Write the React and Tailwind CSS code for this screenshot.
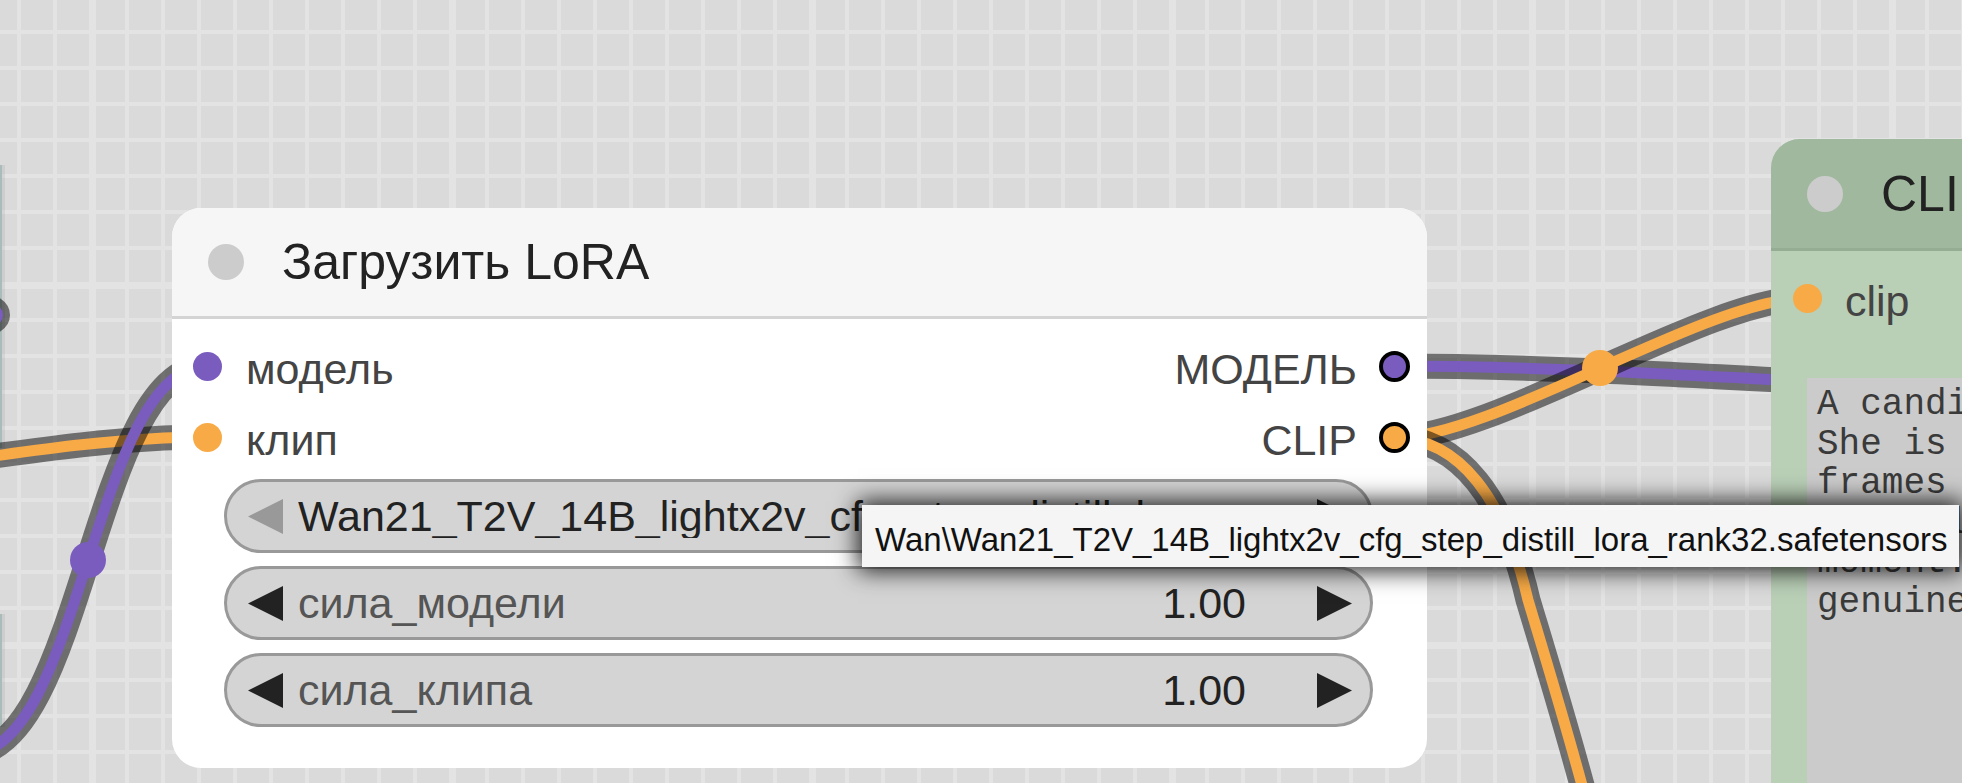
import React from "react";

const PURPLE = "#7a5cbe";
const ORANGE = "#f8aa46";

function Canvas() {
  const v = [];
  for (let k = 0; 17 + 36 * k < 1962; k++) v.push({ x: 17 + 36 * k, w: k % 10 === 2 ? 7 : 4 });
  const h = [];
  for (let k = 0; 30 + 36 * k < 783; k++) h.push({ y: 30 + 36 * k, h: k % 10 === 7 ? 7 : 4 });
  const wires = [
    { d: "M-300,492 C-100,477 60,437 207,437", c: ORANGE },
    { d: "M-31,754 C83,754 93,366 207,366", c: PURPLE },
    { d: "M-40,300 C10,305 10,325 -40,330", c: PURPLE },
    { d: "M1394,366 C1550,366 1700,376 2000,392", c: PURPLE },
    { d: "M1394,438 C1494,438 1707,298 1807,298", c: ORANGE },
    { d: "M1394,438 C1460,438 1505,500 1528,600 C1546,660 1566,725 1586,800", c: ORANGE },
  ];
  return (
    <svg className="absolute inset-0" width="1962" height="783" viewBox="0 0 1962 783">
      <rect x="0" y="0" width="1962" height="783" fill="#dadada" />
      {v.map((l) => (
        <rect key={"v" + l.x} x={l.x} y="0" width={l.w} height="783" fill="#e3e3e3" />
      ))}
      {h.map((l) => (
        <rect key={"h" + l.y} x="0" y={l.y} width="1962" height={l.h} fill="#e3e3e3" />
      ))}
      <rect x="0" y="165" width="2" height="283" fill="#a9bcb9" />
      <rect x="2" y="165" width="3" height="283" fill="#000" opacity="0.06" />
      <rect x="0" y="614" width="2" height="113" fill="#a9bcb9" />
      <rect x="2" y="614" width="3" height="113" fill="#000" opacity="0.06" />
      {wires.map((w, i) => (
        <g key={i} fill="none" strokeLinecap="round">
          <path d={w.d} stroke="rgba(0,0,0,0.5)" strokeWidth="25" />
          <path d={w.d} stroke={w.c} strokeWidth="11" />
        </g>
      ))}
      <circle cx="88" cy="560" r="18" fill={PURPLE} />
      <circle cx="1600" cy="368" r="18" fill={ORANGE} />
    </svg>
  );
}

function Arrow({ dir, color }) {
  return (
    <svg width="35" height="35" viewBox="0 0 35 35" className="shrink-0">
      <polygon points={dir === "left" ? "35,0 35,35 0,17.5" : "0,0 0,35 35,17.5"} fill={color} />
    </svg>
  );
}

function NumberWidget({ label, value }) {
  return (
    <div className="h-[74px] rounded-full border-[3px] border-[#999] bg-[#d4d4d4] flex items-center">
      <div className="ml-[21px]">
        <Arrow dir="left" color="#222" />
      </div>
      <span className="ml-[15px] text-[43px] leading-none text-[#555]">{label}</span>
      <span className="flex-1" />
      <span className="text-[43px] leading-none text-[#222]">{value}</span>
      <div className="ml-[71px] mr-[18px]">
        <Arrow dir="right" color="#222" />
      </div>
    </div>
  );
}

function LoraNode() {
  return (
    <div className="absolute left-[172px] top-[208px] w-[1255px] h-[560px] rounded-[29px] bg-white overflow-hidden">
      <div className="h-[111px] bg-[#f6f6f6] border-b-[3px] border-[#d4d4d4] flex items-center">
        <div className="ml-[36px] w-[36px] h-[36px] rounded-full bg-[#cccccc]" />
        <span className="ml-[38px] text-[50px] leading-none text-[#222]">Загрузить LoRA</span>
      </div>
      <div className="pt-[12px]">
        <div className="h-[71px] flex items-center">
          <div className="ml-[21px] w-[29px] h-[29px] rounded-full bg-[#7a5cbe]" />
          <span className="ml-[24px] mt-[6px] text-[43px] leading-none text-[#444]">модель</span>
          <span className="flex-1" />
          <span className="mr-[22px] mt-[6px] text-[43px] leading-none text-[#444]">МОДЕЛЬ</span>
          <div className="mr-[17px] w-[31px] h-[31px] rounded-full bg-[#7a5cbe] border-[4px] border-black" />
        </div>
        <div className="h-[71px] flex items-center">
          <div className="ml-[21px] w-[29px] h-[29px] rounded-full bg-[#f8aa46]" />
          <span className="ml-[24px] mt-[6px] text-[43px] leading-none text-[#444]">клип</span>
          <span className="flex-1" />
          <span className="mr-[22px] mt-[6px] text-[43px] leading-none text-[#444]">CLIP</span>
          <div className="mr-[17px] w-[31px] h-[31px] rounded-full bg-[#f8aa46] border-[4px] border-black" />
        </div>
      </div>
      <div className="mt-[6px] pl-[52px] pr-[54px] flex flex-col gap-[13px]">
        <div className="h-[74px] rounded-full border-[3px] border-[#999] bg-[#d4d4d4] flex items-center">
          <div className="ml-[21px]">
            <Arrow dir="left" color="#999" />
          </div>
          <span className="ml-[15px] flex-1 min-w-0 truncate text-[43px] leading-none text-[#222]">
            Wan21_T2V_14B_lightx2v_cfg_step_distill_lora_rank32.safetensors
          </span>
          <div className="ml-[20px] mr-[18px]">
            <Arrow dir="right" color="#222" />
          </div>
        </div>
        <NumberWidget label="сила_модели" value="1.00" />
        <NumberWidget label="сила_клипа" value="1.00" />
      </div>
    </div>
  );
}

function ClipNode() {
  const lines = [
    "A candid photo of a young woman in a sunlit kitchen.",
    "She is laughing at something off camera, her hair",
    "frames her face and her eyes are bright and warm,",
    "natural light from the window softens the whole",
    "moment. The image feels spontaneous and full of",
    "genuine joy and everyday happiness.",
  ];
  return (
    <div className="absolute left-[1771px] top-[139px] w-[700px] h-[700px] rounded-t-[29px] bg-[#b9cfb6] overflow-hidden">
      <div className="h-[112px] bg-[#a0b99e] border-b-[3px] border-[#95ae93] flex items-center">
        <div className="ml-[36px] w-[36px] h-[36px] rounded-full bg-[#cccccc] shrink-0" />
        <span className="ml-[38px] text-[50px] leading-none text-[#222] whitespace-nowrap">
          CLIP Text Encode (Prompt)
        </span>
      </div>
      <div className="pt-[12px]">
        <div className="h-[71px] flex items-center">
          <div className="ml-[22px] w-[29px] h-[29px] rounded-full bg-[#f8aa46]" />
          <span className="ml-[23px] mt-[6px] text-[43px] leading-none text-[#444]">clip</span>
        </div>
      </div>
      <div className="mt-[44px] ml-[36px] h-[500px] bg-[#cbcbcb] pl-[10px] pt-[7px] overflow-hidden font-['Liberation_Mono','Courier_New',monospace] text-[36px] leading-[39.6px] text-[#3a3a3a] whitespace-pre">
        {lines.join("\n")}
      </div>
    </div>
  );
}

function Tooltip() {
  return (
    <div className="absolute left-[862px] top-[505px] w-[1097px] h-[62px] bg-[#f5f5f5] shadow-[0_0_22px_4px_rgba(0,0,0,0.85)] pl-[13px] pt-[18px] whitespace-nowrap overflow-hidden">
      <span className="text-[33px] leading-none text-[#111]">
        Wan\Wan21_T2V_14B_lightx2v_cfg_step_distill_lora_rank32.safetensors
      </span>
    </div>
  );
}

export default function App() {
  return (
    <div className="relative w-[1962px] h-[783px] overflow-hidden bg-[#dadada] font-['Liberation_Sans',Arial,sans-serif]">
      <Canvas />
      <LoraNode />
      <ClipNode />
      <Tooltip />
    </div>
  );
}
